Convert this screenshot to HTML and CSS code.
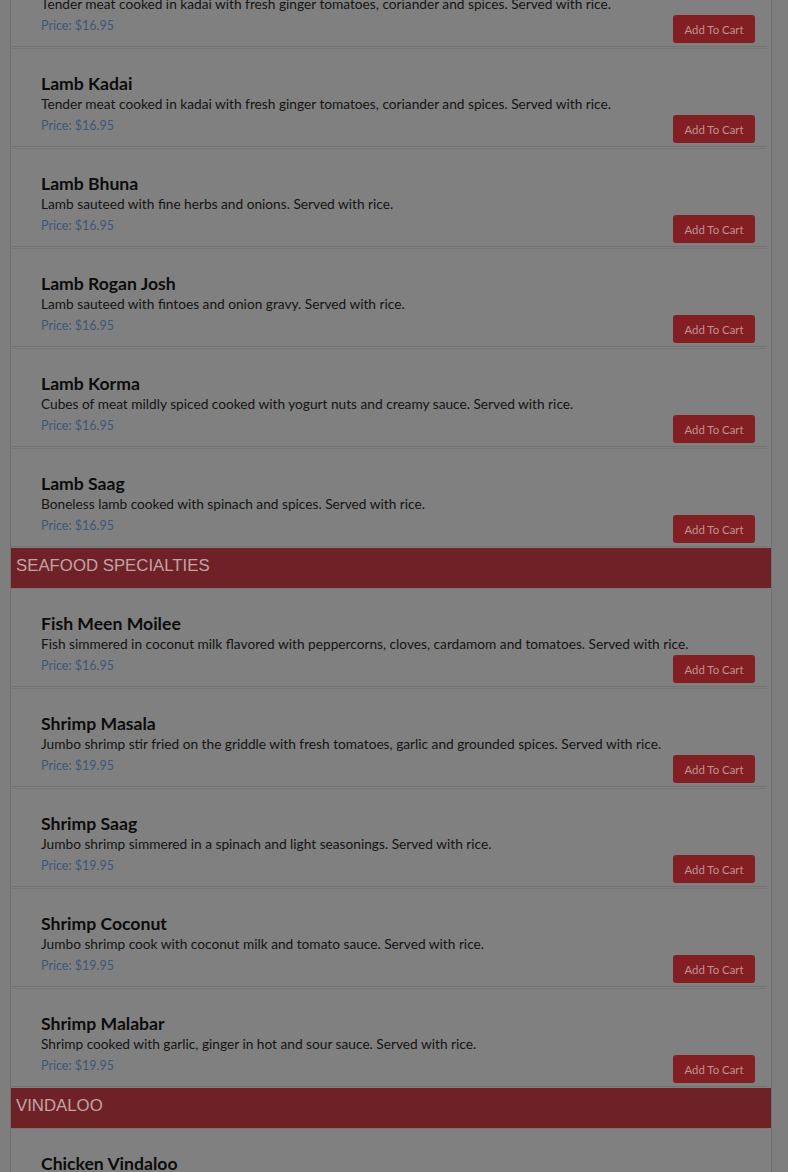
FILE: index.html
```html
<!DOCTYPE html>
<html>
<head>
<meta charset="utf-8">
<link rel="stylesheet" href="styles.css">
</head>
<body>
<div class="menu">
  <div class="item">
    <div class="name">Goat Kadai</div>
    <div class="desc">Tender meat cooked in kadai with fresh ginger tomatoes, coriander and spices. Served with rice.</div>
    <div class="row"><span class="price">Price: $16.95</span><button class="cart">Add To Cart</button></div>
  </div>
  <div class="item">
    <div class="name">Lamb Kadai</div>
    <div class="desc">Tender meat cooked in kadai with fresh ginger tomatoes, coriander and spices. Served with rice.</div>
    <div class="row"><span class="price">Price: $16.95</span><button class="cart">Add To Cart</button></div>
  </div>
  <div class="item">
    <div class="name">Lamb Bhuna</div>
    <div class="desc">Lamb sauteed with fine herbs and onions. Served with rice.</div>
    <div class="row"><span class="price">Price: $16.95</span><button class="cart">Add To Cart</button></div>
  </div>
  <div class="item">
    <div class="name">Lamb Rogan Josh</div>
    <div class="desc">Lamb sauteed with fintoes and onion gravy. Served with rice.</div>
    <div class="row"><span class="price">Price: $16.95</span><button class="cart">Add To Cart</button></div>
  </div>
  <div class="item">
    <div class="name">Lamb Korma</div>
    <div class="desc">Cubes of meat mildly spiced cooked with yogurt nuts and creamy sauce. Served with rice.</div>
    <div class="row"><span class="price">Price: $16.95</span><button class="cart">Add To Cart</button></div>
  </div>
  <div class="item">
    <div class="name">Lamb Saag</div>
    <div class="desc">Boneless lamb cooked with spinach and spices. Served with rice.</div>
    <div class="row"><span class="price">Price: $16.95</span><button class="cart">Add To Cart</button></div>
  </div>
  <div class="section">SEAFOOD SPECIALTIES</div>
  <div class="item">
    <div class="name">Fish Meen Moilee</div>
    <div class="desc">Fish simmered in coconut milk flavored with peppercorns, cloves, cardamom and tomatoes. Served with rice.</div>
    <div class="row"><span class="price">Price: $16.95</span><button class="cart">Add To Cart</button></div>
  </div>
  <div class="item">
    <div class="name">Shrimp Masala</div>
    <div class="desc">Jumbo shrimp stir fried on the griddle with fresh tomatoes, garlic and grounded spices. Served with rice.</div>
    <div class="row"><span class="price">Price: $19.95</span><button class="cart">Add To Cart</button></div>
  </div>
  <div class="item">
    <div class="name">Shrimp Saag</div>
    <div class="desc">Jumbo shrimp simmered in a spinach and light seasonings. Served with rice.</div>
    <div class="row"><span class="price">Price: $19.95</span><button class="cart">Add To Cart</button></div>
  </div>
  <div class="item">
    <div class="name">Shrimp Coconut</div>
    <div class="desc">Jumbo shrimp cook with coconut milk and tomato sauce. Served with rice.</div>
    <div class="row"><span class="price">Price: $19.95</span><button class="cart">Add To Cart</button></div>
  </div>
  <div class="item">
    <div class="name">Shrimp Malabar</div>
    <div class="desc">Shrimp cooked with garlic, ginger in hot and sour sauce. Served with rice.</div>
    <div class="row"><span class="price">Price: $19.95</span><button class="cart">Add To Cart</button></div>
  </div>
  <div class="section">VINDALOO</div>
  <div class="item">
    <div class="name">Chicken Vindaloo</div>
    <div class="desc">Chicken cooked in hot and spicy vindaloo sauce with potatoes. Served with rice.</div>
    <div class="row"><span class="price">Price: $16.95</span><button class="cart">Add To Cart</button></div>
  </div>
</div>
</body>
</html>
```
FILE: styles.css
```css
html, body {
  margin: 0;
  padding: 0;
  background: #7e7e7e;
  overflow: hidden;
}
body {
  height: 1172px;
}
.menu {
  width: 762px;
  box-sizing: border-box;
  margin: -52px 0 0 10px;
  background: #808080;
  border-left: 1px solid #6f6f6f;
  border-right: 1px solid #6f6f6f;
  font-family: Lato, "Liberation Sans", sans-serif;
}
.item {
  border-top: 1px solid #777777;
  border-bottom: 1px solid #737373;
  margin: 0 4px 1px 0;
  padding: 24px 12px 3px 30px;
}
.name {
  font-size: 17.6px;
  line-height: 22px;
  font-weight: 700;
  color: #0c0c0c;
}
.desc {
  font-size: 13.7px;
  line-height: 18px;
  color: #141414;
  white-space: nowrap;
}
.row {
  margin-top: 2px;
  display: flex;
  justify-content: space-between;
  align-items: flex-start;
}
.price {
  font-size: 12.5px;
  line-height: 21px;
  color: #3d5777;
}
.cart {
  width: 82px;
  height: 28px;
  border: 0;
  border-radius: 3px;
  background: #831e23;
  color: #bf9294;
  font-family: Lato, "Liberation Sans", sans-serif;
  font-size: 11.4px;
  padding: 0;
}
.section {
  height: 40px;
  box-sizing: border-box;
  background: #6e2227;
  color: #c3a3a5;
  font-family: "Liberation Sans", Arial, sans-serif;
  font-size: 16.8px;
  line-height: 36px;
  padding-left: 5px;
  text-transform: uppercase;
}
```
